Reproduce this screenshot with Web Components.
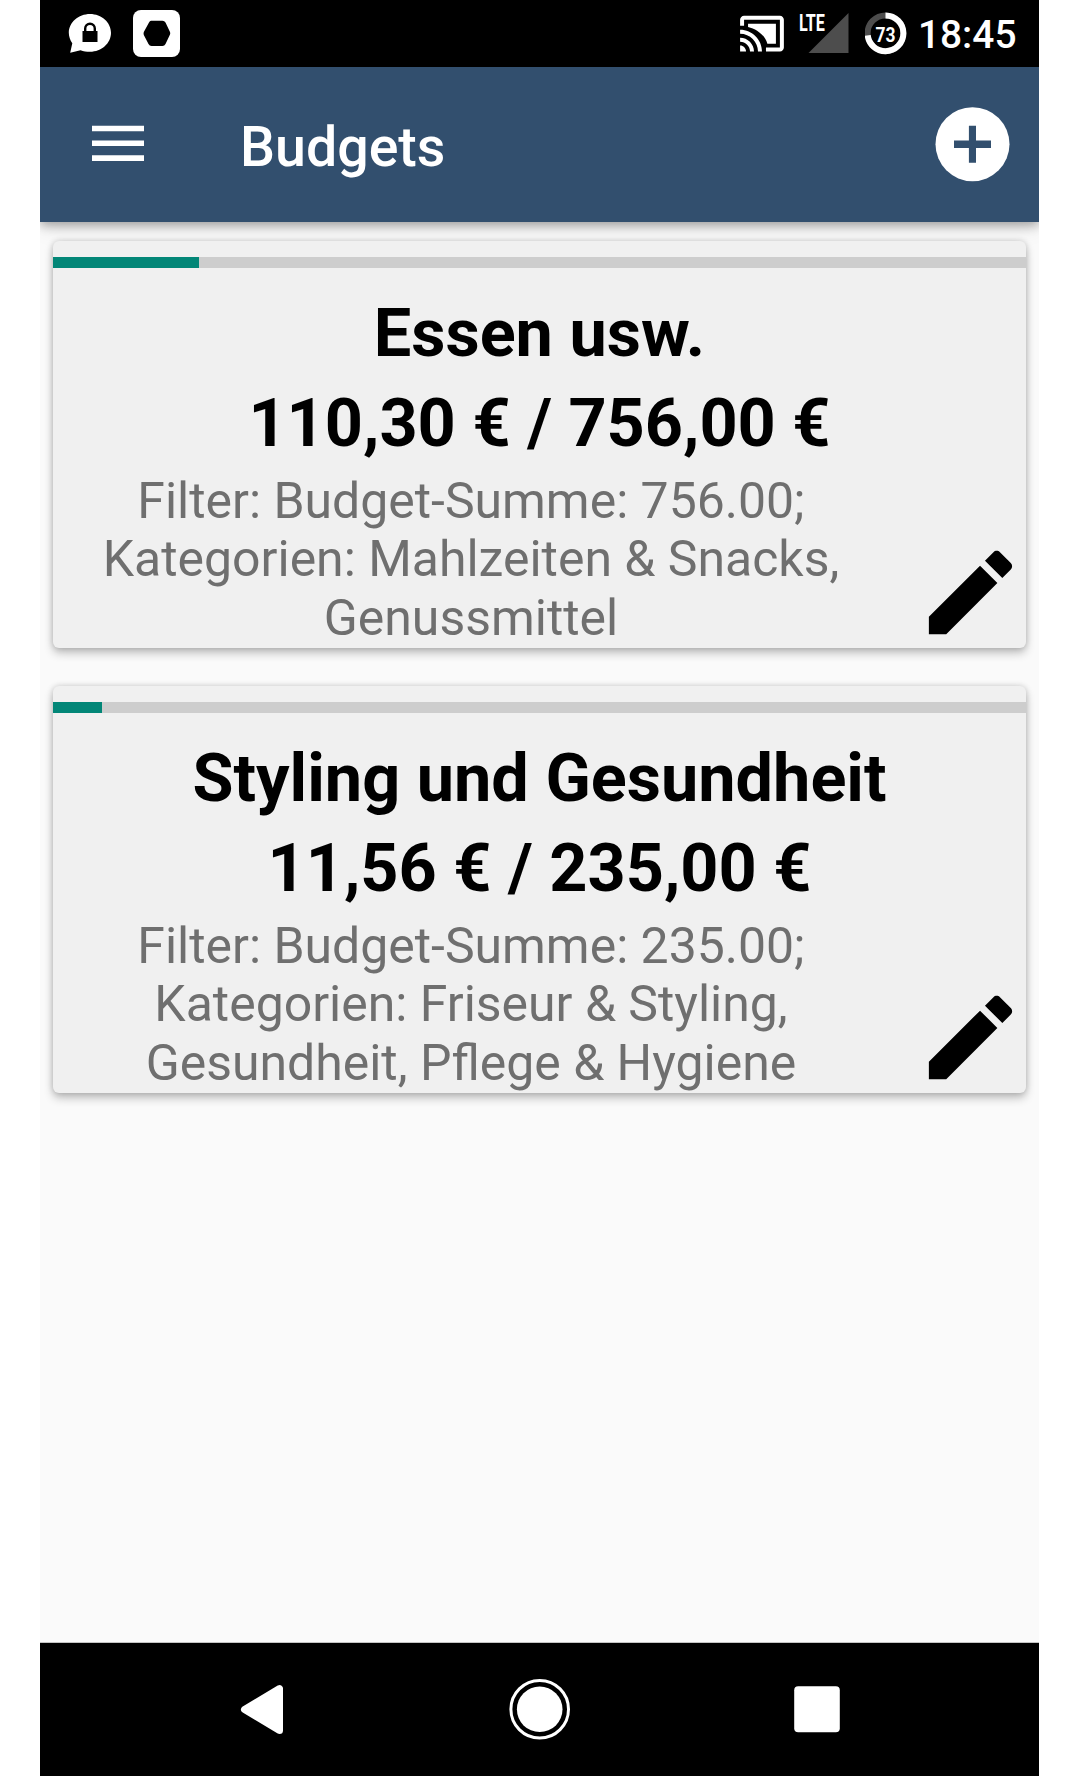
<!DOCTYPE html>
<html lang="de">
<head>
<meta charset="utf-8">
<title>Budgets</title>
<style>
body{margin:0;background:#fff;font-family:Roboto,"Liberation Sans",sans-serif}
</style>
</head>
<body>
<phone-screen>
  <status-bar slot="top" time="18:45" battery="73" network="LTE"></status-bar>
  <app-bar slot="top">Budgets</app-bar>
  <budget-card percent="15">
    <span slot="name">Essen usw.</span>
    <span slot="amount">110,30 € / 756,00 €</span>
    <span slot="filter">Filter: Budget-Summe: 756.00; Kategorien: Mahlzeiten &amp; Snacks, Genussmittel</span>
  </budget-card>
  <budget-card percent="5">
    <span slot="name">Styling und Gesundheit</span>
    <span slot="amount">11,56 € / 235,00 €</span>
    <span slot="filter">Filter: Budget-Summe: 235.00; Kategorien: Friseur &amp; Styling, Gesundheit, Pflege &amp; Hygiene</span>
  </budget-card>
  <nav-bar slot="bottom"></nav-bar>
</phone-screen>
<script>
const define = (name, render) => customElements.define(name, class extends HTMLElement {
  constructor() { super(); this.attachShadow({mode: 'open'}); }
  connectedCallback() { this.shadowRoot.innerHTML = render(this); }
});

define('phone-screen', () => `
<style>
:host{display:flex;flex-direction:column;width:999px;height:1776px;margin-left:40px;background:#fafafa;overflow:hidden}
main{flex:1;display:flex;flex-direction:column;gap:38px;padding:18.500px 13px 0}
</style>
<slot name="top"></slot><main><slot></slot></main><slot name="bottom"></slot>`);

define('status-bar', el => `
<style>
:host{display:flex;align-items:flex-start;height:67px;background:#000;color:#fff;flex:none}
svg{display:block;flex:none}
.time{margin-left:11px;margin-right:22.500px;font-size:38.85px;font-weight:500;line-height:45px;padding-top:12px;white-space:nowrap}
.space{flex:1}
text{font-family:Roboto,sans-serif;fill:#fff}
</style>
<svg style="margin-left:28px" width="44" height="67"><path fill="#fff" d="M22 14C10.500 14 .8 22.400.8 32.700C.8 36.500 2.200 40.300 4.300 43.200L2.200 52.700L12.500 50.200C15.500 51.200 18.500 51.700 22 51.700C33.500 51.700 43 43.200 43 32.700C43 22.400 33.500 14 22 14Z"/><path d="M14.500 31H29.500V42H14.500Z"/><path d="M17.200 32V28.500A4.800 4.800 0 0 1 26.800 28.500V32" fill="none" stroke="#000" stroke-width="2.400"/></svg>
<svg style="margin-left:21px" width="47" height="67"><rect y="10" width="47" height="47" rx="8" fill="#fff"/><path d="M18 20.700H29.500Q31.500 20.700 32.500 22.500L37 32Q37.500 33.300 37 34.600L32.500 44Q31.500 46 29.500 46H18.500Q16.500 46 15.500 44L10.800 35Q10.300 33.500 10.800 32L16 22.500Q16.800 20.700 18 20.700Z"/></svg>
<span class="space"></span>
<svg width="44" height="67"><g transform="translate(-1.900 9.800) scale(1.990)" fill="#fff"><path d="M21 3H3c-1.100 0-2 .9-2 2v3h2V5h18v14h-7v2h7c1.100 0 2-.9 2-2V5c0-1.100-.9-2-2-2z"/><path d="M5 7v1.600c4.700 1.100 8.500 4.300 9.700 8.400H19V7H5z"/><path d="M1 18v3h3c0-1.660-1.340-3-3-3zm0-4v2c2.760 0 5 2.240 5 5h2c0-3.870-3.130-7-7-7zm0-4v2c4.970 0 9 4.030 9 9h2c0-6.080-4.930-11-11-11z"/></g></svg>
<svg style="margin-left:15px" width="51" height="67"><path d="M49.500 13V53H9.500Z" fill="#4d4d4d"/><text x="-.1" y="31.300" font-size="24" font-weight="700" textLength="26" lengthAdjust="spacingAndGlyphs">${el.getAttribute('network')}</text></svg>
<svg style="margin-left:15px" width="42" height="67"><circle cx="20.500" cy="33.300" r="17.900" fill="none" stroke="#4d4d4d" stroke-width="6"/><circle cx="20.500" cy="33.300" r="17.900" fill="none" stroke="#fff" stroke-width="6" pathLength="100" stroke-dasharray="${el.getAttribute('battery')} 100" transform="rotate(-90 20.500 33.300)"/><text x="20.500" y="41.700" font-size="20.500" font-weight="700" text-anchor="middle" textLength="20" lengthAdjust="spacingAndGlyphs">${el.getAttribute('battery')}</text></svg>
<span class="time">${el.getAttribute('time')}</span>`);

define('app-bar', () => `
<style>
:host{display:flex;align-items:flex-start;height:155px;flex:none;background:#324f6e;color:#fff;box-shadow:0 3px 10px rgba(0,0,0,.32),0 8px 20px -2px rgba(0,0,0,.1)}
svg{display:block;flex:none}
.title{flex:1;margin-left:96px;font-size:55.500px;font-weight:500;line-height:65px;padding-top:48px}
</style>
<svg style="margin-left:52px" width="52" height="155"><path fill="#fff" d="M0 58.700H52V64.300H0ZM0 73.500H52V79.100H0ZM0 88.300H52V93.900H0Z"/></svg>
<span class="title"><slot></slot></span>
<svg style="margin-right:29px" width="75" height="155"><circle cx="37.500" cy="77.200" r="37" fill="#fff"/><path fill="#324f6e" d="M33.900 58.700H41V73.600H56V81H41V95.800H33.900V81H19V73.600H33.900Z"/></svg>`);

define('budget-card', el => `
<style>
:host{display:flex;flex-direction:column;box-sizing:border-box;height:407px;flex:none;padding-top:16.500px;background:#f0f0f0;border-radius:6px;box-shadow:0 5px 10px rgba(0,0,0,.24),0 0 6px rgba(0,0,0,.16);text-align:center}
.track{height:11px;flex:none;background:#cdcdcd}
.fill{height:11px;width:${el.getAttribute('percent')}%;background:#028677}
.head{font-size:66.600px;font-weight:700;line-height:89.700px;color:#000;white-space:nowrap}
.name{margin-top:21.200px}
.row{display:flex;margin-top:3px;align-items:flex-start}
.filter{width:836px;font-size:49.950px;line-height:58.530px;color:#6f6f6f}
svg{display:block;margin:65.500px 0 0 26px;flex:none}
</style>
<div class="track"><div class="fill"></div></div>
<div class="head name"><slot name="name"></slot></div>
<div class="head"><slot name="amount"></slot></div>
<div class="row"><div class="filter"><slot name="filter"></slot></div>
<svg width="111" height="111" viewBox="0 0 24 24"><path d="M3 17.250V21h3.750L17.810 9.940l-3.750-3.750L3 17.250zM20.710 7.040c.39-.39.39-1.020 0-1.410l-2.340-2.340c-.39-.39-1.020-.39-1.410 0l-1.830 1.830 3.750 3.750 1.830-1.830z"/></svg></div>`);

define('nav-bar', () => `
<style>
:host{display:flex;box-sizing:border-box;height:134px;flex:none;background:#000;border-top:1px solid #c4c4c4}
svg{display:block;flex:none}
</style>
<svg style="margin-left:200px" width="44" height="133"><path d="M4.500 66.500L39.500 45.600V87.400Z" fill="#fff" stroke="#fff" stroke-width="7" stroke-linejoin="round"/></svg>
<svg style="margin-left:225px" width="62" height="133"><circle cx="30.700" cy="66.300" r="28.800" fill="none" stroke="#fff" stroke-width="3"/><circle cx="30.700" cy="66.300" r="22.800" fill="#fff"/></svg>
<svg style="margin-left:223px" width="47" height="133"><rect x=".2" y="43.300" width="45.600" height="46" rx="4" fill="#fff"/></svg>`);
</script>
</body>
</html>
